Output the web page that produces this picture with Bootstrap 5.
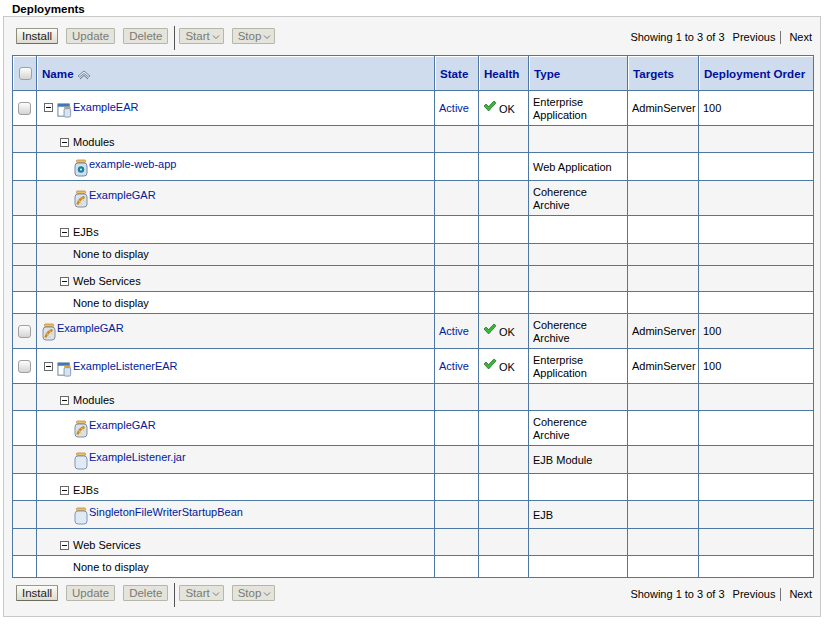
<!DOCTYPE html>
<html lang="en">
<head>
<meta charset="utf-8">
<title>Deployments</title>
<link rel="stylesheet" href="https://cdn.jsdelivr.net/npm/bootstrap@5.3.0/dist/css/bootstrap.min.css">
<style>
body{background:#fff;font-family:"Liberation Sans",Arial,sans-serif;font-size:11px;color:#000;line-height:13px;}
.dep-page{width:827px;height:625px;padding:2px 6px 0 12px;}
.dep-title{font-weight:700;font-size:11.6px;line-height:13px;margin:0 0 1px 0;}
.dep-panel{margin-left:-9px;width:818px;height:601px;background:#f5f5f5;border:1px solid #c9c9c9;padding:0 6px 0 8px;}
.dep-bar{height:38px;padding:11px 0 0 4px;}
.dep-bar-b{height:38px;padding-top:7px;}
.dep-btn{height:16px;border:1px solid #b5b7a9;background:#e4e4dc;color:#7a7a72;font-size:11.5px;line-height:14px;padding:0 5px;border-radius:1px;}
.dep-btn:disabled{color:#7a7a72;background:#e4e4dc;border-color:#b5b7a9;opacity:1;}
.dep-btn-on{background:linear-gradient(#fbfbf8,#dcdcd0);border-color:#9a9a8c #8c8c7c #6c6c5c;color:#1c1c1c;}
.dep-btn-menu{padding-right:3px;}
.dep-sep{width:1px;height:24px;background:#555;margin:-2px -4px 0 -2px;}
.dep-caret{display:inline-block;width:8px;height:6px;margin-left:2px;}
.dep-pager{font-size:11px;padding-right:2px;padding-top:3px;}
.dep-pipe{border-right:1px solid #777;padding-right:5px;margin-right:8px;}
table.dep-tbl{table-layout:fixed;width:801px;border-collapse:collapse;margin:0;color:#000;}
.dep-tbl th,.dep-tbl td{border:1px solid #4f77a3;padding:0 4px;vertical-align:middle;font-size:11px;line-height:13px;overflow:visible;white-space:normal;box-shadow:none;background:transparent;}
.dep-tbl th{background:#cfdcee;color:#00109c;font-weight:700;font-size:11.6px;height:35px;padding-left:5px;padding-top:1px;white-space:nowrap;box-shadow:inset 1px 1px 0 #fff;}
.dep-tbl tr.w td{background:#fff;}
.dep-tbl tr.g td{background:#f5f5f5;}
.dep-tbl td.dep-sec{padding-top:6px;}
.dep-tbl td.dep-top{padding-top:4px;}
.dep-tbl td.dep-top2{padding-top:6px;}
.dep-tbl td.dep-typ,.dep-tbl td.dep-nudge{padding-top:2px;}
.h22{height:22px}.h26{height:26px}.h27{height:27px}.h28{height:28px}.h35{height:35px}
.dep-link{color:#00209c;text-decoration:none;}
.dep-tree{display:flex;align-items:flex-start;}
.dep-l1{padding-left:19px;}
.dep-l0{padding-left:3px;}
.dep-l00{padding-left:1px;}
.dep-l2{padding-left:33px;}
.dep-icon{flex:none;margin-top:1px;margin-right:1px;}
.dep-icon-ear{margin-right:0;}
.dep-tog{flex:none;width:9px;height:9px;margin-top:2px;margin-right:4px;}
.dep-none{padding-left:32px;}
.dep-chk{width:13px;height:13px;border:1px solid #a0a0a0;border-radius:3px;background:linear-gradient(#fdfdfd,#d4d4d4);appearance:none;display:block;margin:0 auto;}
.dep-okc{display:inline-flex;align-items:flex-start;gap:2px;padding-top:3px;}
.dep-okc svg{margin-top:-3px;}
</style>
</head>
<body>
<svg width="0" height="0" class="d-block" aria-hidden="true">
<defs>
<symbol id="i-minus" viewBox="0 0 9 9"><rect x=".5" y=".5" width="8" height="8" fill="#fff" stroke="#6a6a6a"/><path d="M2 4.500h5" stroke="#111"/></symbol>
<symbol id="i-ear" viewBox="0 0 17 18"><rect x="1" y="2" width="12" height="13" fill="#fff" stroke="#5d7c9a"/><rect x="1" y="2" width="12" height="3" fill="#3f78b5"/><rect x="7.500" y="5" width="7" height="2" fill="#e0a33f"/><rect x="7.500" y="7" width="7" height="9" rx="1.500" fill="#d8e3ef" stroke="#7e98b3"/></symbol>
<symbol id="i-jar" viewBox="0 0 14 18"><rect x="2.500" y="1" width="9" height="2.500" rx=".8" fill="#eebe6a" stroke="#b98a36" stroke-width=".8"/><rect x="1" y="4" width="12" height="13" rx="3" fill="#dfeaf5" stroke="#7f99b5"/></symbol>
<symbol id="i-web" viewBox="0 0 14 18"><rect x="2.500" y="1" width="9" height="2.500" rx=".8" fill="#eebe6a" stroke="#b98a36" stroke-width=".8"/><rect x="1" y="4" width="12" height="13" rx="3" fill="#cfe0ee" stroke="#6f8aa6"/><circle cx="7" cy="10.500" r="3.200" fill="#1f7f9c"/><circle cx="7" cy="10.500" r="1" fill="#dff"/></symbol>
<symbol id="i-gar" viewBox="0 0 14 18"><rect x="2.500" y="1" width="9" height="2.500" rx=".8" fill="#eebe6a" stroke="#b98a36" stroke-width=".8"/><rect x="1" y="4" width="12" height="13" rx="3" fill="#dbe3ea" stroke="#7f8ea0"/><path d="M3.500 14.500C4.500 11 7.500 8 10.500 7" stroke="#c98a2a" stroke-width="2.600" fill="none"/><path d="M4.500 10l3.500 4.500M7 7.500l3.500 4" stroke="#edc47c" fill="none"/></symbol>
<symbol id="i-ok" viewBox="0 0 14 12"><path d="M1 6l2-2 2.600 2.600L11 1l2 1.800L5.600 11z" fill="#3cb53c" stroke="#17691a" stroke-width=".7"/></symbol>
<symbol id="i-sort" viewBox="0 0 14 10"><path d="M1 6l6-5 6 5-1.500 1L7 3.500 2.500 7z" fill="#e4ebf4" stroke="#5f708c" stroke-width=".8"/><path d="M3 9l4-3.500L11 9" fill="none" stroke="#5f708c" stroke-width="1"/></symbol>
<symbol id="i-caret" viewBox="0 0 8 6"><path d="M1 1.500l3 3 3-3" fill="none" stroke="#7a7a72"/></symbol>
</defs>
</svg>
<div class="dep-page">
<div class="dep-title">Deployments</div>
<div class="dep-panel">
<div class="dep-bar d-flex align-items-start justify-content-between">
<div class="d-flex align-items-start gap-2">
<button class="dep-btn dep-btn-on" type="button">Install</button>
<button class="dep-btn" disabled type="button">Update</button>
<button class="dep-btn" disabled type="button">Delete</button>
<span class="dep-sep"></span>
<button class="dep-btn dep-btn-menu" disabled type="button">Start<svg class="dep-caret"><use href="#i-caret"/></svg></button>
<button class="dep-btn dep-btn-menu" disabled type="button">Stop<svg class="dep-caret"><use href="#i-caret"/></svg></button>
</div>
<div class="dep-pager d-flex"><span class="me-2">Showing 1 to 3 of 3</span><span class="dep-pipe">Previous</span><span>Next</span></div>
</div>
<table class="table dep-tbl">
<colgroup><col style="width:24px"><col style="width:398px"><col style="width:44px"><col style="width:50px"><col style="width:99px"><col style="width:71px"><col style="width:115px"></colgroup>
<thead><tr><th><input class="dep-chk" type="checkbox" aria-label="Select all"></th><th>Name <svg width="14" height="10"><use href="#i-sort"/></svg></th><th>State</th><th>Health</th><th>Type</th><th>Targets</th><th>Deployment Order</th></tr></thead>
<tbody>
<tr class="w h35"><td><input class="dep-chk" type="checkbox" aria-label="Select"></td><td class="dep-top"><div class="dep-tree dep-l0"><svg class="dep-tog"><use href="#i-minus"/></svg><svg class="dep-icon dep-icon-ear" width="16" height="17"><use href="#i-ear"/></svg><a class="dep-link" href="#">ExampleEAR</a></div></td><td><a class="dep-link" href="#">Active</a></td><td><span class="dep-okc"><svg width="14" height="12"><use href="#i-ok"/></svg>OK</span></td><td class="dep-typ">Enterprise Application</td><td>AdminServer</td><td>100</td></tr>
<tr class="g h27"><td></td><td class="dep-sec"><div class="dep-tree dep-l1"><svg class="dep-tog"><use href="#i-minus"/></svg>Modules</div></td><td></td><td></td><td></td><td></td><td></td></tr>
<tr class="w h28"><td></td><td class="dep-nudge"><div class="dep-tree dep-l2"><svg class="dep-icon" width="14" height="18"><use href="#i-web"/></svg><a class="dep-link" href="#">example-web-app</a></div></td><td></td><td></td><td class="dep-typ">Web Application</td><td></td><td></td></tr>
<tr class="g h35"><td></td><td><div class="dep-tree dep-l2"><svg class="dep-icon" width="14" height="18"><use href="#i-gar"/></svg><a class="dep-link" href="#">ExampleGAR</a></div></td><td></td><td></td><td class="dep-typ">Coherence Archive</td><td></td><td></td></tr>
<tr class="w h28"><td></td><td class="dep-sec"><div class="dep-tree dep-l1"><svg class="dep-tog"><use href="#i-minus"/></svg>EJBs</div></td><td></td><td></td><td></td><td></td><td></td></tr>
<tr class="g h22"><td></td><td><div class="dep-tree dep-none">None to display</div></td><td></td><td></td><td></td><td></td><td></td></tr>
<tr class="g h26"><td></td><td class="dep-sec"><div class="dep-tree dep-l1"><svg class="dep-tog"><use href="#i-minus"/></svg>Web Services</div></td><td></td><td></td><td></td><td></td><td></td></tr>
<tr class="w h22"><td></td><td class="dep-nudge"><div class="dep-tree dep-none">None to display</div></td><td></td><td></td><td></td><td></td><td></td></tr>
<tr class="g h35"><td><input class="dep-chk" type="checkbox" aria-label="Select"></td><td><div class="dep-tree dep-l00"><svg class="dep-icon" width="14" height="18"><use href="#i-gar"/></svg><a class="dep-link" href="#">ExampleGAR</a></div></td><td><a class="dep-link" href="#">Active</a></td><td><span class="dep-okc"><svg width="14" height="12"><use href="#i-ok"/></svg>OK</span></td><td class="dep-typ">Coherence Archive</td><td>AdminServer</td><td>100</td></tr>
<tr class="w h35"><td><input class="dep-chk" type="checkbox" aria-label="Select"></td><td class="dep-top2"><div class="dep-tree dep-l0"><svg class="dep-tog"><use href="#i-minus"/></svg><svg class="dep-icon dep-icon-ear" width="16" height="17"><use href="#i-ear"/></svg><a class="dep-link" href="#">ExampleListenerEAR</a></div></td><td><a class="dep-link" href="#">Active</a></td><td><span class="dep-okc"><svg width="14" height="12"><use href="#i-ok"/></svg>OK</span></td><td class="dep-typ">Enterprise Application</td><td>AdminServer</td><td>100</td></tr>
<tr class="g h27"><td></td><td class="dep-sec"><div class="dep-tree dep-l1"><svg class="dep-tog"><use href="#i-minus"/></svg>Modules</div></td><td></td><td></td><td></td><td></td><td></td></tr>
<tr class="w h35"><td></td><td><div class="dep-tree dep-l2"><svg class="dep-icon" width="14" height="18"><use href="#i-gar"/></svg><a class="dep-link" href="#">ExampleGAR</a></div></td><td></td><td></td><td class="dep-typ">Coherence Archive</td><td></td><td></td></tr>
<tr class="g h28"><td></td><td class="dep-nudge"><div class="dep-tree dep-l2"><svg class="dep-icon" width="14" height="18"><use href="#i-jar"/></svg><a class="dep-link" href="#">ExampleListener.jar</a></div></td><td></td><td></td><td class="dep-typ">EJB Module</td><td></td><td></td></tr>
<tr class="w h27"><td></td><td class="dep-sec"><div class="dep-tree dep-l1"><svg class="dep-tog"><use href="#i-minus"/></svg>EJBs</div></td><td></td><td></td><td></td><td></td><td></td></tr>
<tr class="g h28"><td></td><td class="dep-nudge"><div class="dep-tree dep-l2"><svg class="dep-icon" width="14" height="18"><use href="#i-jar"/></svg><a class="dep-link" href="#">SingletonFileWriterStartupBean</a></div></td><td></td><td></td><td class="dep-typ">EJB</td><td></td><td></td></tr>
<tr class="g h27"><td></td><td class="dep-sec"><div class="dep-tree dep-l1"><svg class="dep-tog"><use href="#i-minus"/></svg>Web Services</div></td><td></td><td></td><td></td><td></td><td></td></tr>
<tr class="w h22"><td></td><td class="dep-nudge"><div class="dep-tree dep-none">None to display</div></td><td></td><td></td><td></td><td></td><td></td></tr>
</tbody>
</table>
<div class="dep-bar dep-bar-b d-flex align-items-start justify-content-between">
<div class="d-flex align-items-start gap-2">
<button class="dep-btn dep-btn-on" type="button">Install</button>
<button class="dep-btn" disabled type="button">Update</button>
<button class="dep-btn" disabled type="button">Delete</button>
<span class="dep-sep"></span>
<button class="dep-btn dep-btn-menu" disabled type="button">Start<svg class="dep-caret"><use href="#i-caret"/></svg></button>
<button class="dep-btn dep-btn-menu" disabled type="button">Stop<svg class="dep-caret"><use href="#i-caret"/></svg></button>
</div>
<div class="dep-pager d-flex"><span class="me-2">Showing 1 to 3 of 3</span><span class="dep-pipe">Previous</span><span>Next</span></div>
</div>
</div>
</div>
<script src="https://cdn.jsdelivr.net/npm/bootstrap@5.3.0/dist/js/bootstrap.bundle.min.js"></script>
</body>
</html>
